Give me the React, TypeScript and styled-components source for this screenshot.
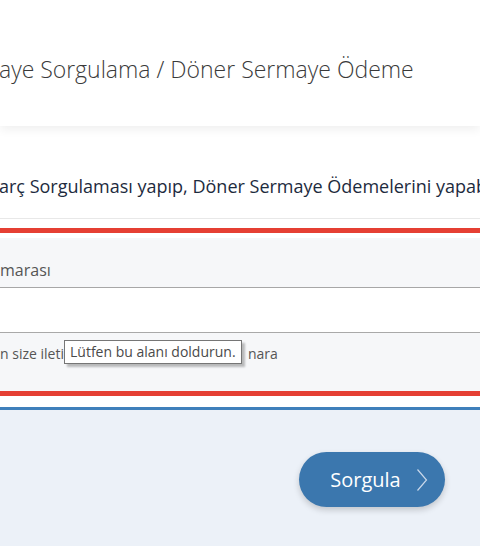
import React from 'react';
import styled, { createGlobalStyle } from 'styled-components';

const GlobalStyle = createGlobalStyle`
  html, body {
    margin: 0;
    padding: 0;
    background: #ecf1f8;
    overflow: hidden;
  }
  body {
    font-family: "Open Sans", "Liberation Sans", sans-serif;
  }
`;

const App = () => {
  return (
    <Root>
      <GlobalStyle />
      <Header>
        <Title>aye Sorgulama / Döner Sermaye Ödeme</Title>
      </Header>
      <Intro>
        <IntroText>arç Sorgulaması yapıp, Döner Sermaye Ödemelerini yapab</IntroText>
      </Intro>
      <FormBox>
        <LabelRow>
          <FieldText>marası</FieldText>
        </LabelRow>
        <InputRow />
        <NoteRow>
          <NoteText>
            n size ileti<Covered>len şifre ve referans nu</Covered>nara
          </NoteText>
          <Tooltip>Lütfen bu alanı doldurun.</Tooltip>
        </NoteRow>
      </FormBox>
      <Footer>
        <SubmitButton type="button">
          Sorgula
          <svg width="12" height="24" viewBox="0 0 12 24" fill="none">
            <path d="M1.5 1.5 L10.5 12 L1.5 22.5" stroke="#c9d8ea" strokeWidth="1.2" />
          </svg>
        </SubmitButton>
      </Footer>
    </Root>
  );
};

const Root = styled.div`
  width: 480px;
  height: 546px;
  display: flex;
  flex-direction: column;
  background: #ffffff;
  overflow: hidden;
`;

const Header = styled.header`
  height: 126px;
  flex-shrink: 0;
  background: #ffffff;
  box-shadow: 0 3px 10px rgba(0, 0, 0, 0.07);
  position: relative;
  z-index: 1;
`;

const Title = styled.h1`
  margin: 0;
  padding-top: 52px;
  margin-left: -1px;
  font-family: "Open Sans Light", "Open Sans", "Liberation Sans", sans-serif;
  font-size: 23px;
  line-height: 34px;
  font-weight: 300;
  color: #3a3a3a;
  white-space: nowrap;
`;

const Intro = styled.div`
  height: 92px;
  flex-shrink: 0;
  border-bottom: 1px solid #e8e8e8;
  margin-bottom: 9px;
`;

const IntroText = styled.p`
  margin: 0;
  padding-top: 46px;
  margin-left: -1px;
  font-size: 18px;
  line-height: 28px;
  color: #1d2b3e;
  white-space: nowrap;
  overflow: hidden;
`;

const FormBox = styled.section`
  flex-shrink: 0;
  border-top: 5px solid #e53f33;
  border-bottom: 5px solid #e53f33;
  padding-top: 5px;
  background: #ffffff;
`;

const LabelRow = styled.div`
  height: 50px;
  box-sizing: border-box;
  background: #f6f7f9;
  border-bottom: 1px solid #a9a9a9;
  display: flex;
  align-items: flex-end;
  padding-bottom: 6px;
`;

const FieldText = styled.span`
  font-size: 16px;
  line-height: 22px;
  color: #555555;
  white-space: nowrap;
`;

const NoteText = styled(FieldText)`
  font-size: 14px;
  display: flex;
  align-items: baseline;
`;

const Covered = styled.span`
  display: inline-block;
  width: 184px;
  overflow: hidden;
  visibility: hidden;
`;

const InputRow = styled.div`
  height: 44px;
  background: #ffffff;
  border-bottom: 1px solid #a9a9a9;
  box-shadow: 0 1px 2px rgba(0, 0, 0, 0.12);
`;

const NoteRow = styled.div`
  height: 58px;
  background: #f6f7f9;
  position: relative;
  padding-top: 10px;
  box-sizing: border-box;
  white-space: nowrap;
  overflow: hidden;
`;

const Tooltip = styled.div`
  position: absolute;
  left: 64px;
  top: 7px;
  height: 24px;
  box-sizing: border-box;
  padding: 0 5px;
  border: 1px solid #767676;
  background: #ffffff;
  box-shadow: 3px 3px 2px rgba(0, 0, 0, 0.25);
  font-size: 14px;
  line-height: 22px;
  color: #4a4a4a;
  white-space: nowrap;
`;

const Footer = styled.footer`
  flex: 1;
  margin-top: 11px;
  border-top: 3px solid #3f80bb;
  background: #ecf1f8;
  display: flex;
  justify-content: flex-end;
  align-items: flex-start;
  padding: 42px 35px 0 0;
`;

const SubmitButton = styled.button`
  width: 146px;
  height: 55px;
  border: none;
  border-radius: 28px;
  background: #3b77ae;
  box-shadow: 0 3px 6px rgba(0, 0, 0, 0.18);
  color: #ffffff;
  font-family: "Open Sans", "Liberation Sans", sans-serif;
  font-size: 20px;
  display: flex;
  align-items: center;
  justify-content: center;
  gap: 15px;
  padding: 0 0 0 14px;
  cursor: pointer;
`;

export default App;
